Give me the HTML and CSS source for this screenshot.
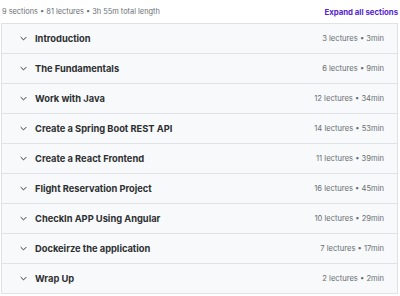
FILE: index.html
```html
<!DOCTYPE html>
<html lang="en">
<head>
    <meta charset="UTF-8">
    <title>Course content</title>
    <link rel="stylesheet" href="styles.css">
</head>
<body>
    <div class="content">
        <div class="summary">
            <span class="totals">9 sections • 81 lectures • 3h 55m total length</span>
            <button class="expand">Expand all sections</button>
        </div>

        <div class="sections">
            <div class="section">
                <span class="chevron"><svg viewBox="0 0 10 6" width="7" height="5"><path d="M1 1l4 4 4-4" fill="none" stroke="#2d2f31" stroke-width="1.4"/></svg></span>
                <span class="title">Introduction</span>
                <span class="meta">3 lectures • 3min</span>
            </div>
            <div class="section">
                <span class="chevron"><svg viewBox="0 0 10 6" width="7" height="5"><path d="M1 1l4 4 4-4" fill="none" stroke="#2d2f31" stroke-width="1.4"/></svg></span>
                <span class="title">The Fundamentals</span>
                <span class="meta">6 lectures • 9min</span>
            </div>
            <div class="section">
                <span class="chevron"><svg viewBox="0 0 10 6" width="7" height="5"><path d="M1 1l4 4 4-4" fill="none" stroke="#2d2f31" stroke-width="1.4"/></svg></span>
                <span class="title">Work with Java</span>
                <span class="meta">12 lectures • 34min</span>
            </div>
            <div class="section">
                <span class="chevron"><svg viewBox="0 0 10 6" width="7" height="5"><path d="M1 1l4 4 4-4" fill="none" stroke="#2d2f31" stroke-width="1.4"/></svg></span>
                <span class="title">Create a Spring Boot REST API</span>
                <span class="meta">14 lectures • 53min</span>
            </div>
            <div class="section">
                <span class="chevron"><svg viewBox="0 0 10 6" width="7" height="5"><path d="M1 1l4 4 4-4" fill="none" stroke="#2d2f31" stroke-width="1.4"/></svg></span>
                <span class="title">Create a React Frontend</span>
                <span class="meta">11 lectures • 39min</span>
            </div>
            <div class="section">
                <span class="chevron"><svg viewBox="0 0 10 6" width="7" height="5"><path d="M1 1l4 4 4-4" fill="none" stroke="#2d2f31" stroke-width="1.4"/></svg></span>
                <span class="title">Flight Reservation Project</span>
                <span class="meta">16 lectures • 45min</span>
            </div>
            <div class="section">
                <span class="chevron"><svg viewBox="0 0 10 6" width="7" height="5"><path d="M1 1l4 4 4-4" fill="none" stroke="#2d2f31" stroke-width="1.4"/></svg></span>
                <span class="title">CheckIn APP Using Angular</span>
                <span class="meta">10 lectures • 29min</span>
            </div>
            <div class="section">
                <span class="chevron"><svg viewBox="0 0 10 6" width="7" height="5"><path d="M1 1l4 4 4-4" fill="none" stroke="#2d2f31" stroke-width="1.4"/></svg></span>
                <span class="title">Dockeirze the application</span>
                <span class="meta">7 lectures • 17min</span>
            </div>
            <div class="section">
                <span class="chevron"><svg viewBox="0 0 10 6" width="7" height="5"><path d="M1 1l4 4 4-4" fill="none" stroke="#2d2f31" stroke-width="1.4"/></svg></span>
                <span class="title">Wrap Up</span>
                <span class="meta">2 lectures • 2min</span>
            </div>
        </div>
    </div>
</body>
</html>
```

FILE: styles.css
```css
body {
    margin: 0;
    font-family: Inter, "Liberation Sans", sans-serif;
    color: #2d2f31;
    background: #fff;
}
.content {
    padding: 0 2px 0 1px;
}
.summary {
    display: flex;
    justify-content: space-between;
    align-items: center;
    height: 23px;
    padding-left: 1px;
}
.totals {
    font-size: 7.4px;
    color: #6a6f73;
}
.expand {
    border: 0;
    background: none;
    padding: 0;
    font-family: inherit;
    font-size: 7.8px;
    font-weight: 700;
    color: #5624d0;
}
.sections {
    border: 1px solid #dfe3e6;
}
.section {
    display: flex;
    align-items: center;
    height: 29px;
    padding: 0 13px 0 18px;
    background: #f7f9fa;
    border-bottom: 1px solid #dfe3e6;
}
.section:last-child {
    border-bottom: 0;
}
.chevron {
    display: flex;
    width: 15px;
}
.title {
    flex: 1;
    font-size: 9.3px;
    font-weight: 700;
}
.meta {
    font-size: 7.6px;
    color: #6a6f73;
}
```
